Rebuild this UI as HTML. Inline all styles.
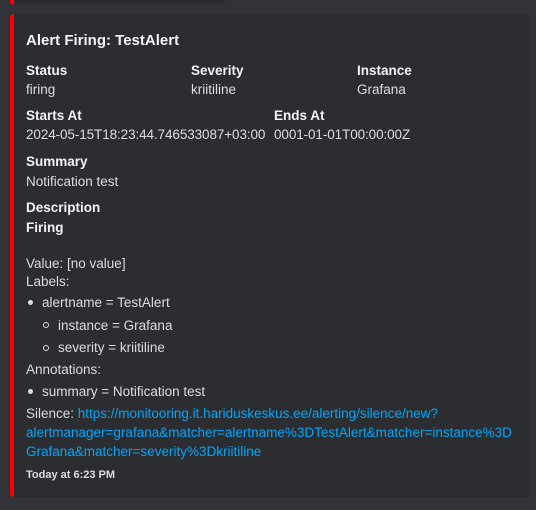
<!DOCTYPE html>
<html><head><style>
body{margin:0;width:536px;height:510px;background:#313338;position:relative;overflow:hidden;font-family:"Liberation Sans",sans-serif;}
.prev{position:absolute;left:10px;top:0;width:215px;height:5px;background:#2b2d31;border-left:4px solid #f00;border-radius:0 0 4px 4px;box-sizing:border-box}
.emb{position:absolute;left:10px;top:14px;width:519px;height:483px;background:#2b2d31;border-left:4px solid #f00;border-radius:4px;box-sizing:border-box}
.t{position:absolute;line-height:18px;font-size:13.5px;color:#dbdee1;white-space:nowrap;margin-top:1px}
.b{font-weight:bold;color:#f2f3f5}
a{color:#00a8fc;text-decoration:none}
.d1{position:absolute;width:5px;height:5px;border-radius:50%;background:#dbdee1}
.d2{position:absolute;width:4px;height:4px;border-radius:50%;border:1px solid #dbdee1;box-sizing:content-box}
</style></head><body>
<div class="prev"></div>
<div class="emb"></div>
<div class="t b" style="left:26px;top:31px;font-size:15px">Alert Firing: TestAlert</div>
<div class="t b" style="left:26px;top:61px">Status</div>
<div class="t" style="left:26px;top:80px">firing</div>
<div class="t b" style="left:191px;top:61px">Severity</div>
<div class="t" style="left:191px;top:80px">kriitiline</div>
<div class="t b" style="left:357px;top:61px">Instance</div>
<div class="t" style="left:357px;top:80px">Grafana</div>
<div class="t b" style="left:26px;top:106px">Starts At</div>
<div class="t" style="left:26px;top:125px;letter-spacing:-0.1px">2024-05-15T18:23:44.746533087+03:00</div>
<div class="t b" style="left:274px;top:106px">Ends At</div>
<div class="t" style="left:274px;top:125px;letter-spacing:-0.1px">0001-01-01T00:00:00Z</div>
<div class="t b" style="left:26px;top:152px">Summary</div>
<div class="t" style="left:26px;top:172px">Notification test</div>
<div class="t b" style="left:26px;top:198px">Description</div>
<div class="t b" style="left:26px;top:218px">Firing</div>
<div class="t" style="left:26px;top:254px">Value: [no value]</div>
<div class="t" style="left:26px;top:272px">Labels:</div>
<div class="d1" style="left:28px;top:300px"></div>
<div class="t" style="left:42px;top:293px">alertname = TestAlert</div>
<div class="d2" style="left:43px;top:322px"></div>
<div class="t" style="left:58px;top:316px">instance = Grafana</div>
<div class="d2" style="left:43px;top:345px"></div>
<div class="t" style="left:58px;top:338px">severity = kriitiline</div>
<div class="t" style="left:26px;top:360px">Annotations:</div>
<div class="d1" style="left:28px;top:389px"></div>
<div class="t" style="left:42px;top:382px">summary = Notification test</div>
<div class="t" style="left:26px;top:404px">Silence: <a>https://monitooring.it.hariduskeskus.ee/alerting/silence/new?</a></div>
<div class="t" style="left:26px;top:423px"><a>alertmanager=grafana&amp;matcher=alertname%3DTestAlert&amp;matcher=instance%3D</a></div>
<div class="t" style="left:26px;top:442px"><a>Grafana&amp;matcher=severity%3Dkriitiline</a></div>
<div class="t b" style="left:26px;top:465px;font-size:11px;color:#dbdee1">Today at 6:23 PM</div>
</body></html>
